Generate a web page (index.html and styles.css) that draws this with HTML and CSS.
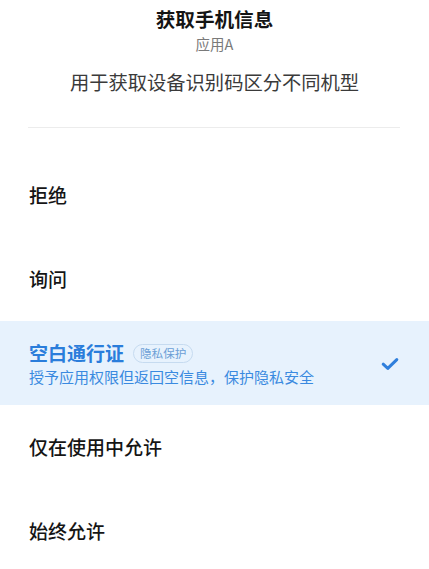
FILE: index.html
```html
<!DOCTYPE html>
<html lang="zh">
<head>
<meta charset="utf-8">
<link rel="stylesheet" href="styles.css">
</head>
<body>
<div class="sheet">
  <header class="head">
    <div class="title">获取手机信息</div>
    <div class="app">应用A</div>
    <div class="desc">用于获取设备识别码区分不同机型</div>
  </header>
  <div class="divider"></div>
  <ul class="options">
    <li class="opt"><span class="label">拒绝</span></li>
    <li class="opt"><span class="label">询问</span></li>
    <li class="opt selected">
      <div class="text">
        <div class="row"><span class="label">空白通行证</span><span class="badge">隐私保护</span></div>
        <div class="sub">授予应用权限但返回空信息，保护隐私安全</div>
      </div>
      <svg class="check" width="18" height="14" viewBox="0 0 18 14"><path d="M2.2 7.2 L6.8 11.4 L15.8 2.6" fill="none" stroke="#2f7fdc" stroke-width="3" stroke-linecap="round" stroke-linejoin="round"/></svg>
    </li>
    <li class="opt"><span class="label">仅在使用中允许</span></li>
    <li class="opt"><span class="label">始终允许</span></li>
  </ul>
</div>
</body>
</html>
```
FILE: styles.css
```css
html, body {
  margin: 0;
  padding: 0;
  background: #ffffff;
  font-family: "Noto Sans CJK SC", "Noto Sans", sans-serif;
}
.sheet {
  width: 429px;
  height: 569px;
  overflow: hidden;
}
.head {
  text-align: center;
  padding-top: 6px;
}
.title {
  font-size: 19.6px;
  line-height: 26px;
  font-weight: 700;
  color: #141414;
}
.app {
  margin-top: 3px;
  font-size: 14.5px;
  line-height: 18px;
  color: #7a7a7a;
}
.desc {
  margin-top: 16px;
  font-size: 19.3px;
  line-height: 26px;
  color: #3a3a3a;
}
.divider {
  margin: 32px 29px 0 28px;
  height: 1px;
  background: #ececec;
}
.options {
  list-style: none;
  margin: 25px 0 0;
  padding: 0;
}
.opt {
  height: 84px;
  display: flex;
  align-items: center;
  justify-content: space-between;
  padding: 0 30px 0 29px;
}
.label {
  font-size: 19px;
  line-height: 26px;
  font-weight: 500;
  color: #151515;
}
.selected {
  background: #e7f2fd;
  height: 83px;
  padding-top: 1px;
}
.selected .label {
  color: #2a7ddb;
  font-weight: 700;
}
.text {
  display: flex;
  flex-direction: column;
}
.row {
  display: flex;
  align-items: center;
}
.badge {
  margin-left: 9px;
  height: 17px;
  padding: 0 6px;
  border: 1px solid #c6dbf0;
  border-radius: 10px;
  font-size: 11.6px;
  line-height: 17px;
  color: #6b9fd6;
}
.sub {
  font-size: 15px;
  line-height: 21px;
  color: #3a8ae0;
}
.check {
  display: block;
}
```
